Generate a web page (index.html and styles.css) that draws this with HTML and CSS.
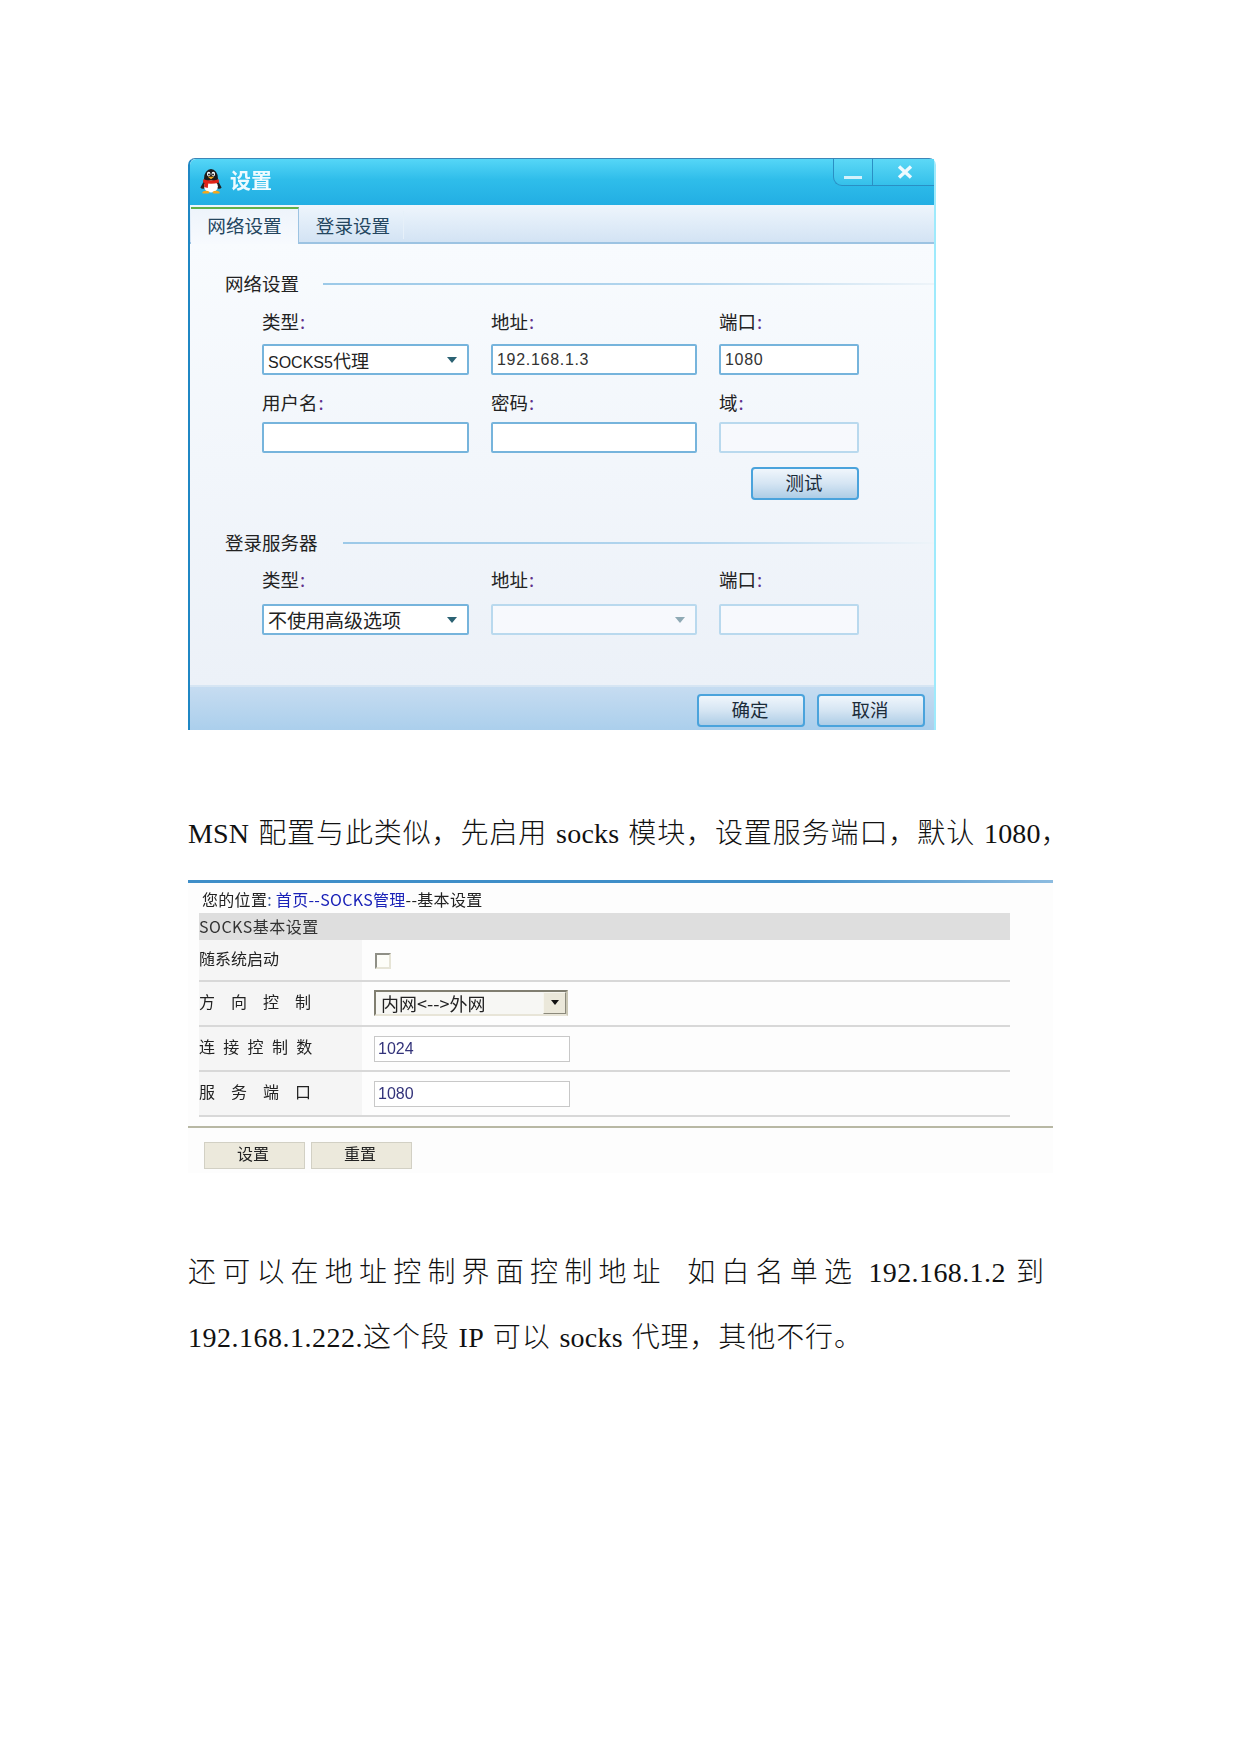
FILE: index.html
```html
<!DOCTYPE html>
<html lang="zh-CN">
<head>
<meta charset="utf-8">
<title>设置</title>
<link rel="stylesheet" href="styles.css">
</head>
<body>
<main class="page">
  <section class="win">
    <header class="titlebar">
      <svg class="qq" viewBox="0 0 26 28" width="24" height="26" aria-hidden="true">
        <ellipse cx="13" cy="11" rx="7.5" ry="10" fill="#1c1c1c"/>
        <path d="M6 13 L1.5 21 Q3 23 6 22 L20 22 Q23 23 24.5 21 L20 13Z" fill="#222"/>
        <ellipse cx="13" cy="20" rx="7.5" ry="6.5" fill="#fff"/>
        <ellipse cx="10.5" cy="6.5" rx="1.9" ry="2.6" fill="#fff"/>
        <ellipse cx="15.5" cy="6.5" rx="1.9" ry="2.6" fill="#fff"/>
        <circle cx="10.8" cy="7" r="1" fill="#111"/>
        <circle cx="15.2" cy="7" r="1" fill="#111"/>
        <path d="M9.5 9.5 H16.5 L13 12Z" fill="#f5a81c"/>
        <path d="M4.5 12 Q13 15 21.5 12 L21.5 15.5 Q13 18.5 4.5 15.5Z" fill="#e02418"/>
        <path d="M6 15 L10 16.5 L9.5 21.5 L5.5 20.5Z" fill="#e02418"/>
        <path d="M3.5 26 Q8 23 11.5 26 L10.5 27.5 H4Z M22.5 26 Q18 23 14.5 26 L15.5 27.5 H22Z" fill="#f5a81c"/>
      </svg>
      <h1 class="wintitle">设置</h1>
      <div class="winbtns">
        <span class="winbtn winbtn-min"><i class="minbar"></i></span>
        <span class="winbtn winbtn-close">
          <svg viewBox="0 0 16 14" width="16" height="14" aria-hidden="true"><path d="M2 1.5 L14 12.5 M14 1.5 L2 12.5" stroke="#eefaff" stroke-width="3.4" fill="none"/></svg>
        </span>
      </div>
    </header>
    <nav class="tabs">
      <span class="tab tab-on">网络设置</span>
      <span class="tab">登录设置</span>
      <i class="tabsep"></i>
    </nav>
    <div class="form">
      <div class="legend legend-first"><span>网络设置</span><i class="rule"></i></div>
      <div class="row row-a">
        <div class="field"><label class="lab">类型<b>:</b></label><div class="ctl ctl-sel"><span class="ctl-mixed"><span class="ctl-en">SOCKS5</span>代理</span><i class="caret"></i></div></div>
        <div class="field"><label class="lab">地址<b>:</b></label><div class="ctl ctl-num">192.168.1.3</div></div>
        <div class="field"><label class="lab">端口<b>:</b></label><div class="ctl ctl-num">1080</div></div>
      </div>
      <div class="row row-b">
        <div class="field"><label class="lab">用户名<b>:</b></label><div class="ctl"></div></div>
        <div class="field"><label class="lab">密码<b>:</b></label><div class="ctl"></div></div>
        <div class="field"><label class="lab">域<b>:</b></label><div class="ctl ctl-off"></div></div>
      </div>
      <div class="testrow"><button class="btn" type="button">测试</button></div>
      <div class="legend legend-second"><span>登录服务器</span><i class="rule"></i></div>
      <div class="row row-c">
        <div class="field"><label class="lab">类型<b>:</b></label><div class="ctl ctl-sel"><span>不使用高级选项</span><i class="caret"></i></div></div>
        <div class="field"><label class="lab">地址<b>:</b></label><div class="ctl ctl-off ctl-sel"><i class="caret caret-off"></i></div></div>
        <div class="field"><label class="lab">端口<b>:</b></label><div class="ctl ctl-off"></div></div>
      </div>
    </div>
    <footer class="winfoot">
      <button class="btn" type="button">确定</button>
      <button class="btn" type="button">取消</button>
    </footer>
  </section>

  <p class="line line-msn"><span class="en">MSN</span> 配置与此类似，先启用 <span class="en">socks</span> 模块，设置服务端口，默认 <span class="en">1080</span>，</p>

  <section class="web">
    <div class="crumb">您的位置<span class="crumb-colon">:</span> <a class="crumb-link">首页--SOCKS管理</a>--基本设置</div>
    <div class="webtable">
      <div class="webhead">SOCKS基本设置</div>
      <div class="webrow webrow-first">
        <div class="webkey">随系统启动</div>
        <div class="webval"><i class="check"></i></div>
      </div>
      <div class="webrow">
        <div class="webkey key-wide">方向控制</div>
        <div class="webval"><div class="websel">内网&lt;--&gt;外网<span class="websel-btn"><i></i></span></div></div>
      </div>
      <div class="webrow">
        <div class="webkey key-mid">连接控制数</div>
        <div class="webval"><div class="webinput">1024</div></div>
      </div>
      <div class="webrow">
        <div class="webkey key-wide">服务端口</div>
        <div class="webval"><div class="webinput">1080</div></div>
      </div>
    </div>
    <div class="webfoot">
      <button class="webbtn" type="button">设置</button>
      <button class="webbtn" type="button">重置</button>
    </div>
  </section>

  <p class="line line-a">还可以在地址控制界面控制地址&nbsp; 如白名单选 <span class="en">192.168.1.2</span> 到</p>
  <p class="line line-b"><span class="en en-ip">192.168.1.222.</span>这个段 <span class="en">IP</span> 可以 <span class="en">socks</span> 代理，其他不行。</p>
</main>
</body>
</html>
```

FILE: styles.css
```css
* { box-sizing: border-box; }
html, body { margin: 0; background: #fff; }
body { font-family: "Liberation Sans", "Noto Sans CJK SC", sans-serif; color: #222; }
.page { padding: 158px 0 0 188px; width: 1241px; height: 1754px; overflow: hidden; }
i { display: block; }

/* QQ settings window */
.win { width: 748px; height: 572px; display: flex; flex-direction: column; border-left: 2px solid #1f87c4; border-right: 2px solid #9eeafc; border-top: 1px solid #3c86b8; border-radius: 7px 7px 0 0; background: #f2f6fb; filter: blur(.35px); }
.titlebar { height: 46px; flex: none; display: flex; align-items: flex-start; padding-left: 9px; background: linear-gradient(#55d6f7, #2fbdea 45%, #22aee3); border-radius: 6px 6px 0 0; }
.qq { margin-top: 9px; flex: none; }
.wintitle { margin: 5px 0 0 7px; font-size: 21px; line-height: 30px; font-weight: 700; color: #eefbff; font-family: "Noto Sans CJK SC", sans-serif; }
.winbtns { margin-left: auto; display: flex; height: 27px; width: 101px; border: 1px solid #2a8fc4; border-width: 0 0 1px 1px; border-radius: 0 0 0 9px; background: linear-gradient(#5cd8f6, #35c0ea); }
.winbtn { display: flex; align-items: center; justify-content: center; }
.winbtn-min { width: 39px; border-right: 1px solid #2a8fc4; padding-top: 11px; }
.winbtn-close { flex: 1; padding: 0 0 1px 2px; }
.minbar { width: 18px; height: 3px; background: #d3f1fb; }
.tabs { height: 39px; flex: none; display: flex; align-items: flex-end; padding-left: 1px; border-bottom: 2px solid #9cc3e2; background: linear-gradient(#eef5fc, #e3eef9 40%, #d3e3f4); }
.tab { width: 108px; height: 36px; display: flex; align-items: center; justify-content: center; font-size: 18.6px; color: #24465f; font-family: "Noto Sans CJK SC", sans-serif; }
.tab-on { height: 37px; margin-bottom: -2px; padding-bottom: 4px; background: linear-gradient(#eef4fb, #f7fafe); border-top: 2px solid #5fb04a; border-right: 1px solid #9cc3e2; }
.tabsep { width: 1px; height: 28px; margin: 0 0 3px -4px; background: #e6f0f9; }

.form { flex: 1; padding-top: 27px; background: linear-gradient(#f8fbfe, #ecf1f8); font-family: "Noto Sans CJK SC", sans-serif; }
.legend { height: 24px; display: flex; align-items: center; padding-left: 35px; font-size: 18.5px; line-height: 24px; color: #222; }
.legend-second { margin-top: 31px; }
.legend-second span { margin-top: -2px; }
.legend-first .rule { margin: 2px 0 0 24px; }
.legend-second .rule { margin-left: 25px; }
.rule { flex: 1; height: 2px; background: linear-gradient(90deg, #9cc9e8, #b4d6ee 60%, #eef4f9); }
.row { display: grid; grid-template-columns: 207px 206px 140px; column-gap: 22px; padding-left: 72px; }
.field { display: flex; flex-direction: column; }
.lab { height: 22px; font-size: 18.5px; line-height: 22px; color: #222; }
.lab b { font-weight: 400; color: #60308a; margin-left: 1px; }
.row-a { margin-top: 15px; }
.row-a .lab { margin-bottom: 12px; }
.row-b { margin-top: 16px; }
.row-b .lab { margin-bottom: 9px; }
.row-c { margin-top: 13px; }
.row-c .lab { margin-bottom: 14px; }
.ctl { height: 31px; display: flex; align-items: center; padding-left: 4px; background: #fff; border: 2px solid #76b4dc; border-radius: 2px; font-size: 19px; color: #222; }
.ctl-mixed { font-size: 18px; }
.ctl-en { font-family: "Liberation Sans", sans-serif; font-size: 16px; }
.ctl-num { font-family: "Liberation Sans", sans-serif; font-size: 16px; letter-spacing: .7px; color: #333; padding-top: 1px; }
.ctl-sel { position: relative; justify-content: space-between; padding-right: 10px; }
.ctl-off { background: #f7f9fd; border-color: #b9d9ee; }
.ctl-off.ctl-sel { justify-content: flex-end; }
.caret { width: 0; height: 0; border: 5.5px solid transparent; border-top: 6px solid #2b6273; border-bottom: 0; }
.caret-off { border-top-color: #8faab5; }
.testrow { display: flex; justify-content: flex-end; margin-top: 14px; padding-right: 75px; }
.btn { width: 108px; height: 33px; padding: 0 2px 3px 0; border: 2px solid #4aa3dc; border-radius: 4px; background: linear-gradient(#f0f6fc, #d5e5f3 50%, #aecde6); font-family: "Noto Sans CJK SC", sans-serif; font-size: 18.5px; line-height: 24px; color: #1c2c3a; }
.winfoot { height: 45px; flex: none; display: flex; justify-content: flex-end; gap: 12px; padding: 7px 9px 0 0; border-top: 2px solid #d6e5f3; background: linear-gradient(#c6dcf1, #abcfec); }

/* Body text */
.line { margin: 0; white-space: nowrap; font-family: "Liberation Serif", "Noto Sans CJK SC", serif; font-size: 28px; font-weight: 300; line-height: 36px; color: #111; letter-spacing: .9px; word-spacing: 1px; }
.en { letter-spacing: .2px; }
.line-msn { margin-top: 86px; }
.line-a { margin-top: 82px; letter-spacing: 6.2px; word-spacing: -3px; }
.line-a .en { letter-spacing: .4px; }
.line-b { margin-top: 29px; }
.line-b .en-ip { letter-spacing: .5px; }

/* SOCKS admin form */
.web { margin-top: 28px; width: 865px; height: 293px; padding: 0 0 0 11px; background: #fdfdfd; border-top: 3px solid transparent; border-image: linear-gradient(90deg, #3f8ec8, #3f8ec8 70%, #8dbce0) 1; font-family: "Noto Sans CJK SC", sans-serif; color: #222; filter: blur(.3px); }
.crumb { height: 30px; padding: 5px 0 0 3px; font-size: 16px; line-height: 22px; letter-spacing: .3px; color: #222; }
.crumb-colon { color: #3a5a9a; }
.crumb-link { color: #1a22b8; }
.webtable { width: 811px; }
.webhead { height: 27px; font-size: 16px; line-height: 26px; letter-spacing: .5px; background: #dedede; color: #333; }
.webrow { height: 45px; display: flex; border-bottom: 2px solid #d8d8d8; }
.webrow-first { height: 42px; }
.webkey { width: 163px; flex: none; display: flex; align-items: center; padding-bottom: 5px; font-size: 16px; background: #f5f5f5; color: #222; }
.key-wide { letter-spacing: 16px; }
.key-mid { letter-spacing: 8.3px; }
.webval { flex: 1; display: flex; align-items: center; padding-left: 12px; }
.check { width: 16px; height: 16px; margin: 2px 0 0 1px; background: #fdfdf8; border: 2px solid; border-color: #8f8f86 #e6e4d6 #e6e4d6 #8f8f86; }
.websel { width: 194px; height: 26px; margin-top: -2px; display: flex; align-items: center; justify-content: space-between; padding: 0 0 0 5px; border: 2px solid; border-color: #807e70 #c9c6b4 #e8e5d8 #807e70; background: #f7f7f4; font-size: 18px; line-height: 18px; color: #222; }
.websel-btn { width: 23px; height: 22px; display: flex; align-items: center; justify-content: center; background: #ebe8da; border: 1px solid; border-color: #f6f5ee #8c8a7c #8c8a7c #f6f5ee; }
.websel-btn i { width: 0; height: 0; border: 4.5px solid transparent; border-top: 5px solid #111; border-bottom: 0; }
.webinput { width: 196px; height: 26px; display: flex; align-items: center; padding-left: 3px; background: #fff; border: 1px solid #c8c8c8; font-family: "Liberation Sans", sans-serif; font-size: 16px; color: #33337a; }
.webfoot { margin: 9px 0 0 -11px; padding: 14px 0 0 16px; display: flex; gap: 6px; border-top: 2px solid #b8b8a4; width: 865px; }
.webbtn { width: 101px; height: 27px; padding: 0 3px 0 0; border: 1px solid #d2d0c4; background: #ece9dc; font-family: "Noto Sans CJK SC", sans-serif; font-size: 16px; line-height: 20px; color: #222; display: flex; justify-content: center; }
```
